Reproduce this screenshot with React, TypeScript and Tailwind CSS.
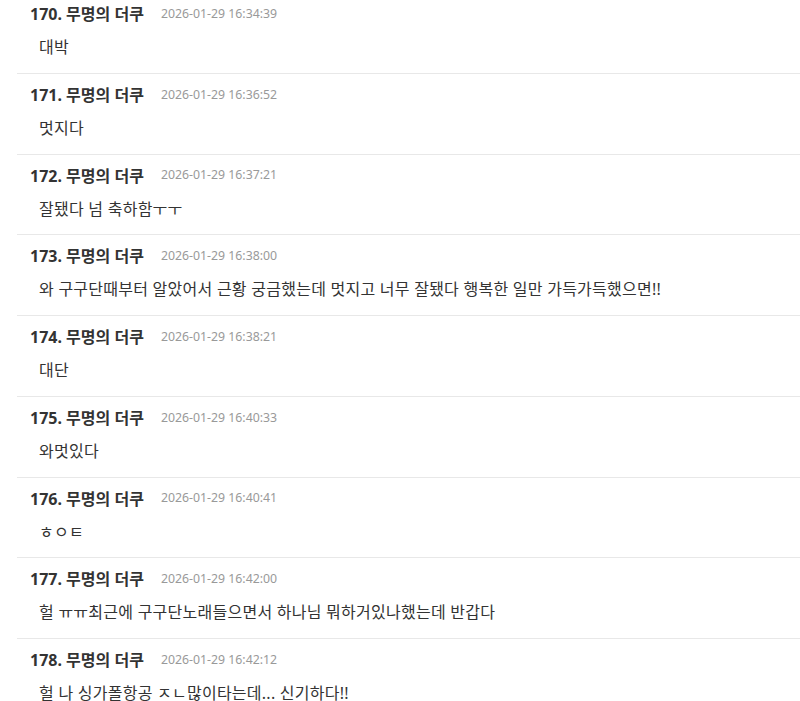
type Comment = {
  no: number;
  time: string;
  text: string;
};

const comments: Comment[] = [
  { no: 170, time: "2026-01-29 16:34:39", text: "대박" },
  { no: 171, time: "2026-01-29 16:36:52", text: "멋지다" },
  { no: 172, time: "2026-01-29 16:37:21", text: "잘됐다 넘 축하함ㅜㅜ" },
  {
    no: 173,
    time: "2026-01-29 16:38:00",
    text: "와 구구단때부터 알았어서 근황 궁금했는데 멋지고 너무 잘됐다 행복한 일만 가득가득했으면!!",
  },
  { no: 174, time: "2026-01-29 16:38:21", text: "대단" },
  { no: 175, time: "2026-01-29 16:40:33", text: "와멋있다" },
  { no: 176, time: "2026-01-29 16:40:41", text: "ㅎㅇㅌ" },
  {
    no: 177,
    time: "2026-01-29 16:42:00",
    text: "헐 ㅠㅠ최근에 구구단노래들으면서 하나님 뭐하거있나했는데 반갑다",
  },
  { no: 178, time: "2026-01-29 16:42:12", text: "헐 나 싱가폴항공 ㅈㄴ많이타는데... 신기하다!!" },
];

function CommentItem({ c }: { c: Comment }) {
  return (
    <li className="border-b border-[#e8e8e8] pl-[13px] pt-[10px] pb-[14.75px]">
      <div className="flex items-center h-[22px]">
        <span className="text-[16px] font-bold text-[#333]">
          {c.no}. 무명의 더쿠
        </span>
        <span className="ml-[17px] text-[12.3px] text-[#999]">{c.time}</span>
      </div>
      <p className="mt-[11px] h-[22px] leading-[22px] pl-[9px] text-[16px] tracking-[0.25px] text-[#333] whitespace-nowrap">
        {c.text}
      </p>
    </li>
  );
}

export default function App() {
  return (
    <div
      className="h-[701px] overflow-hidden bg-white pl-[17px]"
      style={{ fontFamily: '"Noto Sans", "Noto Sans CJK KR", sans-serif' }}
    >
      <ul className="-mt-[7px]">
        {comments.map((c) => (
          <CommentItem key={c.no} c={c} />
        ))}
      </ul>
    </div>
  );
}
